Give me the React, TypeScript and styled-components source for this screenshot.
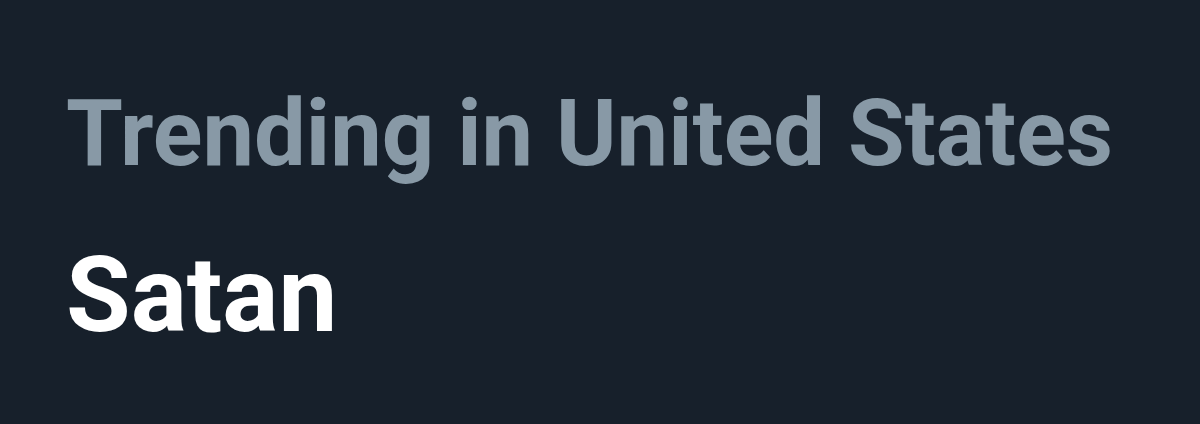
import styled, { createGlobalStyle } from 'styled-components';

const GlobalStyle = createGlobalStyle`
  html, body {
    margin: 0;
    padding: 0;
    background: #17202b;
  }
`;

const Card = styled.div`
  width: 1200px;
  height: 424px;
  box-sizing: border-box;
  padding: 76px 0 0 66px;
  background: #17202b;
  font-family: Roboto, "Noto Sans", sans-serif;
  display: flex;
  flex-direction: column;
`;

const Label = styled.div`
  color: #8899a6;
  font-size: 92px;
  font-weight: 700;
  line-height: 116px;
`;

const Topic = styled.div`
  color: #ffffff;
  font-size: 105px;
  font-weight: 700;
  line-height: 120px;
  margin-top: 44px;
`;

const App = () => (
  <>
    <GlobalStyle />
    <Card>
      <Label>Trending in United States</Label>
      <Topic>Satan</Topic>
    </Card>
  </>
);

export default App;
